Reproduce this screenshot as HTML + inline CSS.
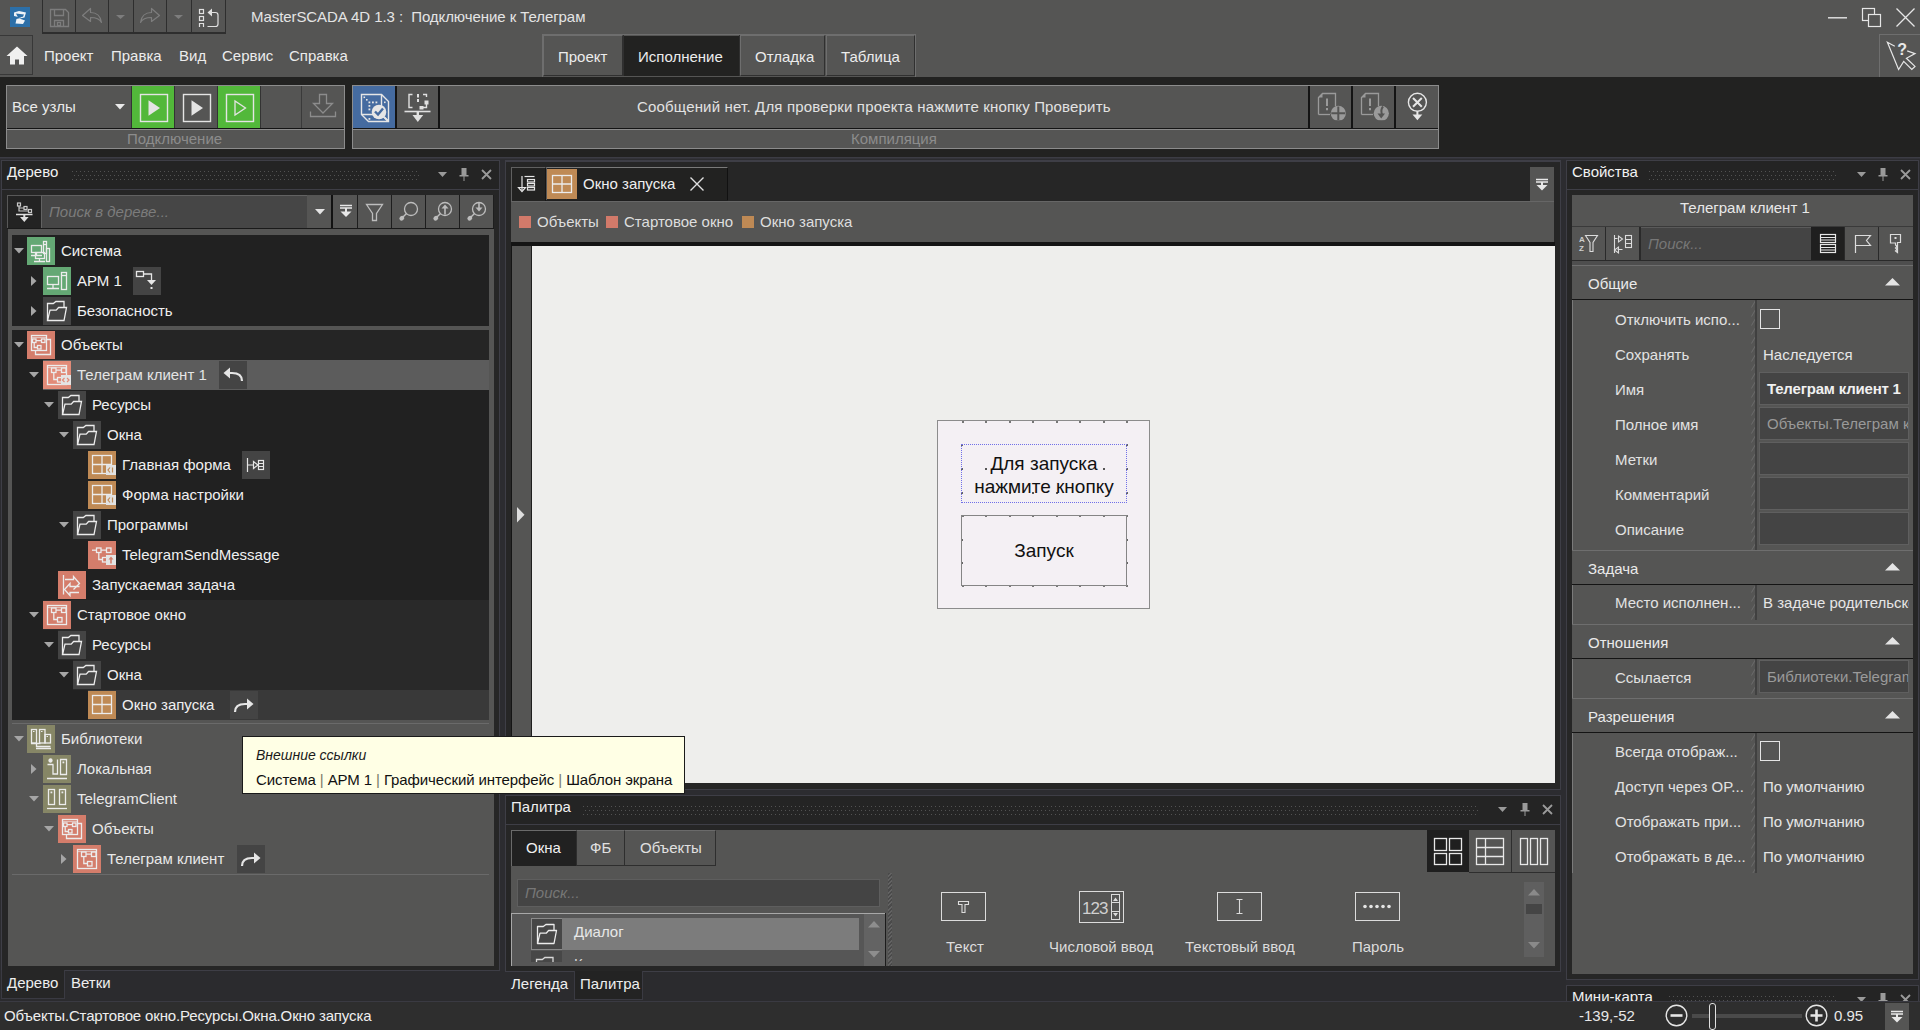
<!DOCTYPE html>
<html><head><meta charset="utf-8"><title>MasterSCADA 4D</title>
<style>*{box-sizing:border-box;margin:0;padding:0}
html,body{width:1920px;height:1030px;overflow:hidden;background:#222221;font-family:"Liberation Sans",sans-serif;font-size:15px;color:#e6e6e6}
.a{position:absolute}
.t{position:absolute;white-space:nowrap;line-height:18px}
svg{position:absolute;overflow:visible}
</style></head><body>
<div class="a" style="left:0px;top:0px;width:1920px;height:77px;background:#555554"></div><div class="a" style="left:10px;top:7px;width:20px;height:20px;background:#2c6fa8"></div><svg style="left:10px;top:7px" width="20" height="20" viewBox="0 0 20 20" ><path d="M4 5.5L9 4l7 1.5-1.5 5-5 1 5.5 2-2 3.5-7.5-.5 1-4.5 5-1.2L4 9z" fill="#eef3f8"/><path d="M6 6.5l8 1-1 2.2-5 .8z" fill="#2c6fa8"/></svg><div class="a" style="left:42px;top:-1px;width:34px;height:35px;border:1px solid #2e2e2e;border-bottom-width:2px"></div><div class="a" style="left:75px;top:-1px;width:34px;height:35px;border:1px solid #2e2e2e;border-bottom-width:2px"></div><div class="a" style="left:108px;top:-1px;width:26px;height:35px;border:1px solid #2e2e2e;border-bottom-width:2px"></div><div class="a" style="left:133px;top:-1px;width:34px;height:35px;border:1px solid #2e2e2e;border-bottom-width:2px"></div><div class="a" style="left:166px;top:-1px;width:26px;height:35px;border:1px solid #2e2e2e;border-bottom-width:2px"></div><div class="a" style="left:191px;top:-1px;width:35px;height:35px;border:1px solid #2e2e2e;border-bottom-width:2px"></div><svg style="left:42px;top:0px" width="34" height="33" viewBox="0 0 34 33" ><g fill="none" stroke="#7d7d7d" stroke-width="1.3"><path d="M8.5 9.5h15l3 3v14h-18z"/><path d="M12.5 9.5v6h9v-6M12.5 26.5v-6h9v6"/><rect x="15.5" y="22.5" width="3" height="3"/></g></svg><svg style="left:75px;top:0px" width="34" height="33" viewBox="0 0 34 33" ><path d="M7.5 15.5l8-7v4c6 0 10 3 11 10-2-4-6-5-11-5v4z" fill="none" stroke="#7d7d7d" stroke-width="1.2" stroke-linejoin="round"/></svg><svg style="left:108px;top:0px" width="26" height="33" viewBox="0 0 26 33" ><path d="M8 15h9l-4.5 4z" fill="#7d7d7d"/></svg><svg style="left:133px;top:0px" width="34" height="33" viewBox="0 0 34 33" ><path d="M26.5 15.5l-8-7v4c-6 0-10 3-11 10 2-4 6-5 11-5v4z" fill="none" stroke="#7d7d7d" stroke-width="1.2" stroke-linejoin="round"/></svg><svg style="left:166px;top:0px" width="26" height="33" viewBox="0 0 26 33" ><path d="M8 15h9l-4.5 4z" fill="#7d7d7d"/></svg><svg style="left:191px;top:0px" width="35" height="33" viewBox="0 0 35 33" ><g fill="none" stroke="#e0e0e0" stroke-width="1.2"><rect x="8.5" y="9.5" width="4" height="4"/><rect x="8.5" y="16.5" width="4" height="4"/><path d="M8.5 27v-3.5h4V27"/><path d="M20 12.5h4.5q2.5 0 2.5 2.5v9q0 2.5-2.5 2.5H16.5"/></g><path d="M21 8.5v8l-4.5-4z" fill="#e0e0e0"/></svg><div class="t" style="left:251px;top:8px;color:#e4e4e4;letter-spacing:-0.07px">MasterSCADA 4D 1.3 :&nbsp; Подключение к Телеграм</div><svg style="left:1828px;top:16px" width="20" height="4" viewBox="0 0 20 4" ><path d="M0 1.8h19" stroke="#e6e6e6" stroke-width="1.4"/></svg><svg style="left:1862px;top:8px" width="20" height="20" viewBox="0 0 20 20" ><g fill="none" stroke="#e6e6e6" stroke-width="1.2"><rect x="0.5" y="0.5" width="12" height="12"/><rect x="6.5" y="6.5" width="12" height="12" fill="#555554"/></g></svg><svg style="left:1896px;top:8px" width="20" height="20" viewBox="0 0 20 20" ><path d="M0.5 0.5l18 18M18.5 0.5l-18 18" stroke="#e6e6e6" stroke-width="1.3"/></svg><div class="a" style="left:-1px;top:35px;width:34px;height:40px;border:1px solid #383838;background:#555554"></div><svg style="left:0px;top:36px" width="32" height="39" viewBox="0 0 32 39" ><path d="M17 10.5L6.5 20H10v8.5h5v-5h4v5h5V20h3.5z" fill="#f0f0f0"/></svg><div class="t" style="left:44px;top:47px;color:#ececec">Проект</div><div class="t" style="left:111px;top:47px;color:#ececec">Правка</div><div class="t" style="left:179px;top:47px;color:#ececec">Вид</div><div class="t" style="left:222px;top:47px;color:#ececec">Сервис</div><div class="t" style="left:289px;top:47px;color:#ececec">Справка</div><div class="a" style="left:542px;top:34px;width:374px;height:43px;border:1px solid #6e6e6e;border-bottom:none"></div><div class="a" style="left:543px;top:35px;width:80px;height:41px;border:1px solid #6e6e6e;border-right-color:#303030;border-bottom-color:#303030"></div><div class="a" style="left:740px;top:35px;width:85px;height:41px;border:1px solid #6e6e6e;border-right-color:#303030;border-bottom-color:#303030"></div><div class="a" style="left:826px;top:35px;width:89px;height:41px;border:1px solid #6e6e6e;border-right-color:#303030;border-bottom-color:#303030"></div><div class="a" style="left:624px;top:36px;width:115px;height:40px;background:#222221"></div><div class="a" style="left:623px;top:35px;width:1px;height:41px;background:#303030"></div><div class="a" style="left:739px;top:35px;width:1px;height:41px;background:#303030"></div><div class="t" style="left:558px;top:48px;color:#ececec">Проект</div><div class="t" style="left:638px;top:48px;color:#ececec">Исполнение</div><div class="t" style="left:755px;top:48px;color:#ececec">Отладка</div><div class="t" style="left:841px;top:48px;color:#ececec">Таблица</div><div class="a" style="left:1879px;top:34px;width:42px;height:43px;border:1px solid #6e6e6e;border-bottom:none;border-right:none"></div><svg style="left:1879px;top:34px" width="41" height="42" viewBox="0 0 41 42" ><path d="M15.8 12.2L8.4 8.3L19.6 35.5L24.7 27.4L32.8 35.5L36 32.4L27.4 24.3L36 19.6L28.2 16.9" fill="none" stroke="#e8e8e8" stroke-width="1.2" stroke-linejoin="miter"/><text x="18.3" y="21" font-family="Liberation Sans" font-weight="bold" font-size="16" fill="#e8e8e8">?</text></svg><div class="a" style="left:6px;top:85px;width:339px;height:64px;background:#555554;border:1px solid #8c8c8c"></div><div class="a" style="left:7px;top:128px;width:337px;height:1px;background:#141414"></div><div class="a" style="left:7px;top:129px;width:337px;height:1px;background:#8c8c8c"></div><div class="t" style="left:127px;top:130px;color:#8c8c8c">Подключение</div><div class="t" style="left:12px;top:98px;color:#eaeaea">Все узлы</div><svg style="left:115px;top:104px" width="10" height="6"><path d="M0 0h10L5 5.5z" fill="#eaeaea"/></svg><div class="a" style="left:131px;top:86px;width:1px;height:42px;background:#333333"></div><div class="a" style="left:132px;top:86px;width:42px;height:42px;background:#52b83a"></div><div class="a" style="left:174px;top:86px;width:1px;height:42px;background:#333"></div><div class="a" style="left:217px;top:86px;width:1px;height:42px;background:#333"></div><div class="a" style="left:218px;top:86px;width:42px;height:42px;background:#52b83a"></div><div class="a" style="left:260px;top:86px;width:1px;height:42px;background:#333"></div><svg style="left:132px;top:86px" width="42" height="42" viewBox="0 0 42 42" ><rect x="8.5" y="8.5" width="27" height="27" fill="none" stroke="#e4e4e4" stroke-width="1.4"/><path d="M16.5 14.2v15.5l11.5-7.75z" fill="#e4e4e4"/></svg><svg style="left:175px;top:86px" width="42" height="42" viewBox="0 0 42 42" ><rect x="8.5" y="8.5" width="27" height="27" fill="none" stroke="#e4e4e4" stroke-width="1.4"/><path d="M16.5 14.2v15.5l11.5-7.75z" fill="#e4e4e4"/></svg><svg style="left:218px;top:86px" width="42" height="42" viewBox="0 0 42 42" ><rect x="8.5" y="8.5" width="27" height="27" fill="none" stroke="#e4e4e4" stroke-width="1.4"/><path d="M17 15v14l10.5-7z" fill="none" stroke="#e4e4e4" stroke-width="1.3"/></svg><div class="a" style="left:301px;top:86px;width:1px;height:42px;background:#3a3a3a"></div><svg style="left:302px;top:86px" width="42" height="42" viewBox="0 0 42 42" ><g fill="none" stroke="#8c8c8c" stroke-width="1.3"><path d="M17.5 8.5h7v9h6l-9.5 9.5-9.5-9.5h6z"/><path d="M8.5 25.5v5h25v-5"/></g></svg><div class="a" style="left:352px;top:85px;width:1087px;height:64px;background:#555554;border:1px solid #8c8c8c"></div><div class="a" style="left:353px;top:128px;width:1085px;height:1px;background:#141414"></div><div class="a" style="left:353px;top:129px;width:1085px;height:1px;background:#8c8c8c"></div><div class="t" style="left:851px;top:130px;color:#8c8c8c">Компиляция</div><div class="t" style="left:637px;top:98px;color:#e2e2e2;letter-spacing:0.17px">Сообщений нет. Для проверки проекта нажмите кнопку Проверить</div><div class="a" style="left:353px;top:86px;width:42px;height:42px;background:#456ba0"></div><div class="a" style="left:395px;top:86px;width:2px;height:42px;background:#141414"></div><div class="a" style="left:438px;top:86px;width:2px;height:42px;background:#141414"></div><div class="a" style="left:1308px;top:86px;width:2px;height:42px;background:#141414"></div><div class="a" style="left:1351px;top:86px;width:2px;height:42px;background:#141414"></div><div class="a" style="left:1394px;top:86px;width:2px;height:42px;background:#141414"></div><svg style="left:353px;top:86px" width="42" height="42" viewBox="0 0 42 42" ><g fill="none" stroke="#e6e6e6" stroke-width="1.4" stroke-linejoin="miter"><path d="M8.5 8.5H28.5L35.5 15.5V35.5H15.5L8.5 28.5Z"/><path d="M28.5 8.5V22M8.5 28.5H20M28.5 28.5L35.5 35.5"/></g><g fill="#e6e6e6"><rect x="10.5" y="10.5" width="1.6" height="1.6"/><rect x="13" y="13" width="1.6" height="1.6"/><rect x="15.5" y="15.5" width="1.8" height="1.8"/><rect x="19" y="15.5" width="1.8" height="1.8"/><rect x="22.5" y="15.5" width="1.8" height="1.8"/><rect x="15.5" y="19" width="1.8" height="1.8"/><rect x="15.5" y="22.5" width="1.8" height="1.8"/><rect x="15.5" y="32" width="1.8" height="1.8"/><rect x="31" y="15.5" width="1.6" height="1.6"/></g><circle cx="26" cy="26" r="7.3" fill="#e6e6e6"/><path d="M22 25.5L25 28.5L30 22.5" fill="none" stroke="#456ba0" stroke-width="2.4"/><path d="M31 31L35 35" stroke="#e6e6e6" stroke-width="2"/></svg><svg style="left:396px;top:86px" width="42" height="42" viewBox="0 0 42 42" ><g fill="none" stroke="#e0e0e0" stroke-width="1.4"><path d="M16.5 8.5H13V21.5H16.5M27 8.5H30.5V11M30.5 18V21.5H27"/></g><g fill="#e0e0e0"><rect x="21" y="8" width="2" height="3.5"/><rect x="21" y="13" width="2" height="3"/><rect x="28.5" y="14.5" width="4" height="4"/><rect x="23.5" y="20" width="4" height="3.5"/></g><path d="M8.5 25.5H34.5" stroke="#e0e0e0" stroke-width="1.6"/><path d="M21.8 25.5V30" stroke="#e0e0e0" stroke-width="2.4"/><path d="M16.5 29H27.2L21.8 36Z" fill="#e0e0e0"/></svg><svg style="left:1309px;top:86px" width="43" height="42" viewBox="0 0 43 42" ><path d="M9.5 28.5V11.5L13.5 7.5H26.5V20" fill="none" stroke="#9a9a9a" stroke-width="1.3"/><path d="M9.5 28.5H21" stroke="#9a9a9a" stroke-width="1.3"/><path d="M9.5 11.5L13.5 7.5V11.5z" fill="#9a9a9a"/><path d="M17 12.5h2v7.5h-2zM17 22h2v2.2h-2z" fill="#9a9a9a"/><clipPath id="cp1"><rect x="0" y="0" width="43" height="34.2"/></clipPath><g clip-path="url(#cp1)"><circle cx="29.3" cy="27.3" r="7.6" fill="#9a9a9a"/><path d="M22.3 27.3h14M29.3 20.5v13.5" stroke="#555554" stroke-width="2"/></g></svg><svg style="left:1352px;top:86px" width="43" height="42" viewBox="0 0 43 42" ><path d="M9.5 28.5V11.5L13.5 7.5H26.5V20" fill="none" stroke="#9a9a9a" stroke-width="1.3"/><path d="M9.5 28.5H21" stroke="#9a9a9a" stroke-width="1.3"/><path d="M9.5 11.5L13.5 7.5V11.5z" fill="#9a9a9a"/><path d="M17 12.5h2v7.5h-2zM17 22h2v2.2h-2z" fill="#9a9a9a"/><clipPath id="cp2"><rect x="0" y="0" width="43" height="34.2"/></clipPath><g clip-path="url(#cp2)"><circle cx="29.3" cy="27.3" r="7.6" fill="#9a9a9a"/><path d="M31 20.5c-2.5 3-2 5-1 8" fill="none" stroke="#555554" stroke-width="2"/><path d="M25.5 27.5h7.5l-3.8 5z" fill="#555554"/></g></svg><svg style="left:1396px;top:86px" width="43" height="42" viewBox="0 0 43 42" ><circle cx="21.4" cy="16.3" r="9" fill="none" stroke="#e6e6e6" stroke-width="1.4"/><path d="M17 12l8.8 8.8M25.8 12l-8.8 8.8" stroke="#e6e6e6" stroke-width="2"/><path d="M21.4 25.3v4.2" stroke="#e6e6e6" stroke-width="2"/><path d="M16.5 28.5h9.8l-4.9 5.8z" fill="#e6e6e6"/></svg>
<div class="a" style="left:0px;top:158px;width:1920px;height:843px;background:#2c2c30"></div>
<div class="a" style="left:0px;top:157px;width:1920px;height:1px;background:#3c3c44"></div>
<div class="a" style="left:0px;top:158px;width:1920px;height:1px;background:#333339"></div>
<div class="a" style="left:1px;top:160px;width:499px;height:811px;border:1px solid #3e3e46;background:#262626"></div><div class="a" style="left:2px;top:161px;width:497px;height:28px;background:#242424"></div><div class="a" style="left:2px;top:189px;width:497px;height:1px;background:#3e3e46"></div><div class="t" style="left:7px;top:163px;color:#f2f2f2;">Дерево</div><div class="a" style="left:72px;top:171px;width:346px;height:1px;background-image:linear-gradient(90deg,#525252 1px,transparent 1px);background-size:4px 1px"></div><div class="a" style="left:74px;top:175px;width:346px;height:1px;background-image:linear-gradient(90deg,#525252 1px,transparent 1px);background-size:4px 1px"></div><div class="a" style="left:72px;top:179px;width:346px;height:1px;background-image:linear-gradient(90deg,#525252 1px,transparent 1px);background-size:4px 1px"></div><svg style="left:438px;top:172px" width="9" height="5"><path d="M0 0h9L4.5 5z" fill="#9a9a9a"/></svg><svg style="left:459px;top:168px" width="10" height="13"><path d="M2.5 0h5v7h2v1.5h-9V7h2z" fill="#9a9a9a"/><path d="M5 8v5" stroke="#9a9a9a" stroke-width="1"/></svg><svg style="left:481px;top:169px" width="11" height="11"><path d="M1 1l9 9M10 1l-9 9" stroke="#9a9a9a" stroke-width="1.8"/></svg><div class="a" style="left:7px;top:195px;width:34px;height:34px;border:1px solid #585858;border-right:none;border-bottom:none;background:#232323"></div><svg style="left:7px;top:195px" width="34" height="34" viewBox="0 0 34 34" ><g fill="none" stroke="#c8c8c8" stroke-width="1.2"><rect x="10.5" y="8" width="3" height="3"/><rect x="17" y="11.5" width="3" height="3"/><rect x="21.5" y="14.5" width="3" height="3"/><path d="M12 11v5h9.5M12 13h5"/></g><path d="M9 19.5h16.5" stroke="#e0e0e0" stroke-width="1.5"/><path d="M17.3 20v3" stroke="#e0e0e0" stroke-width="2"/><path d="M13 22h8.6l-4.3 5z" fill="#e0e0e0"/></svg><div class="a" style="left:41px;top:195px;width:267px;height:34px;background:#464646;border:1px solid #626262;border-right:none"></div><div class="t" style="left:49px;top:203px;color:#7c7c7c;font-style:italic">Поиск в дереве...</div><div class="a" style="left:307px;top:195px;width:25px;height:33px;background:#555554"></div><svg style="left:315px;top:209px" width="10" height="6"><path d="M0 0h10L5 5.5z" fill="#e4e4e4"/></svg><div class="a" style="left:331px;top:195px;width:2px;height:34px;background:#121212"></div><div class="a" style="left:333px;top:195px;width:24px;height:33px;background:#555554"></div><div class="a" style="left:357px;top:195px;width:1px;height:33px;background:#1e1e1e"></div><div class="a" style="left:358px;top:195px;width:33px;height:33px;background:#555554"></div><div class="a" style="left:391px;top:195px;width:1px;height:33px;background:#1e1e1e"></div><div class="a" style="left:392px;top:195px;width:33px;height:33px;background:#555554"></div><div class="a" style="left:425px;top:195px;width:1px;height:33px;background:#1e1e1e"></div><div class="a" style="left:426px;top:195px;width:33px;height:33px;background:#555554"></div><div class="a" style="left:459px;top:195px;width:1px;height:33px;background:#1e1e1e"></div><div class="a" style="left:460px;top:195px;width:33px;height:33px;background:#555554"></div><div class="a" style="left:493px;top:195px;width:1px;height:33px;background:#1e1e1e"></div><div class="a" style="left:7px;top:228px;width:487px;height:1px;background:#1a1a1a"></div><svg style="left:333px;top:195px" width="24" height="33" viewBox="0 0 24 33" ><path d="M7 10.5h12M7 13h12" stroke="#e8e8e8" stroke-width="1.4"/><path d="M13 13v4" stroke="#e8e8e8" stroke-width="2"/><path d="M7.5 16.5h11L13 22z" fill="#e8e8e8"/></svg><svg style="left:358px;top:195px" width="33" height="33" viewBox="0 0 33 33" ><path d="M8.5 9.5h16l-6 9v7h-4v-7z" fill="none" stroke="#bdbdbd" stroke-width="1.3"/></svg><svg style="left:392px;top:195px" width="33" height="33" viewBox="0 0 33 33" ><circle cx="19" cy="14" r="6.5" fill="none" stroke="#bdbdbd" stroke-width="1.3"/><path d="M14.5 18.5l-4 4" stroke="#bdbdbd" stroke-width="1.5"/><ellipse cx="9.8" cy="23.2" rx="2.6" ry="2.2" fill="#bdbdbd" transform="rotate(-40 9.8 23.2)"/></svg><svg style="left:426px;top:195px" width="33" height="33" viewBox="0 0 33 33" ><circle cx="19" cy="14" r="6.5" fill="none" stroke="#bdbdbd" stroke-width="1.3"/><path d="M14.5 18.5l-4 4" stroke="#bdbdbd" stroke-width="1.5"/><ellipse cx="9.8" cy="23.2" rx="2.6" ry="2.2" fill="#bdbdbd" transform="rotate(-40 9.8 23.2)"/><path d="M19 19.5v-8" stroke="#bdbdbd" stroke-width="1.6"/><path d="M15.5 13.5L19 9.5l3.5 4z" fill="#bdbdbd"/></svg><svg style="left:460px;top:195px" width="33" height="33" viewBox="0 0 33 33" ><circle cx="19" cy="14" r="6.5" fill="none" stroke="#bdbdbd" stroke-width="1.3"/><path d="M14.5 18.5l-4 4" stroke="#bdbdbd" stroke-width="1.5"/><ellipse cx="9.8" cy="23.2" rx="2.6" ry="2.2" fill="#bdbdbd" transform="rotate(-40 9.8 23.2)"/><path d="M19 7.5v6" stroke="#bdbdbd" stroke-width="1.6"/><path d="M15.5 12.5L19 16.5l3.5-4z" fill="#bdbdbd"/></svg><div class="a" style="left:8px;top:229px;width:486px;height:737px;background:#555554"></div><div class="a" style="left:12px;top:235px;width:477px;height:91px;background:#212121"></div><div class="a" style="left:12px;top:330px;width:477px;height:390px;background:#212121"></div><div class="a" style="left:12px;top:723px;width:477px;height:1px;background:#6a6a6a"></div><div class="a" style="left:12px;top:874px;width:477px;height:1px;background:#6a6a6a"></div><svg style="left:14px;top:248px" width="10" height="6"><path d="M0 0h10L5 5.5z" fill="#a6a6a6"/></svg><div class="a" style="left:27px;top:237px;width:28px;height:28px;background:#64a874"></div><svg style="left:27px;top:237px" width="28" height="28" viewBox="0 0 28 28" ><g fill="none" stroke="#ececec" stroke-width="1.3"><rect x="4.5" y="8.5" width="10" height="7"/><path d="M4 18.5h11M9.5 15.5v3"/><rect x="16.5" y="4.5" width="3" height="12"/><path d="M16.5 7.5h3"/><rect x="8.5" y="15.5" width="9" height="6"/><path d="M7 24.5h11M12.5 21.5v3"/><rect x="19.5" y="11.5" width="3" height="13"/></g></svg><div class="t" style="left:61px;top:242px;color:#f0f0f0;">Система</div><svg style="left:31px;top:276px" width="6" height="10"><path d="M0 0v10L5.5 5z" fill="#a6a6a6"/></svg><div class="a" style="left:43px;top:267px;width:28px;height:28px;background:#64a874"></div><svg style="left:43px;top:267px" width="28" height="28" viewBox="0 0 28 28" ><g fill="none" stroke="#ececec" stroke-width="1.3"><rect x="4.5" y="9.5" width="11" height="8"/><path d="M4 21.5h12M10 17.5v4"/><rect x="18.5" y="5.5" width="5" height="17"/><path d="M18.5 8.5h5"/></g></svg><div class="t" style="left:77px;top:272px;color:#f0f0f0;">АРМ 1</div><div class="a" style="left:133px;top:267px;width:28px;height:28px;background:#444444"></div><svg style="left:133px;top:267px" width="28" height="28" viewBox="0 0 28 28" ><g fill="none" stroke="#e6e6e6" stroke-width="1.3"><rect x="3.5" y="4.5" width="7" height="5"/><path d="M10.5 7h8v6"/></g><path d="M14 13h9l-4.5 5z" fill="#e6e6e6"/><rect x="17.5" y="20" width="2" height="2" fill="#e6e6e6"/></svg><svg style="left:31px;top:306px" width="6" height="10"><path d="M0 0v10L5.5 5z" fill="#a6a6a6"/></svg><div class="a" style="left:43px;top:297px;width:28px;height:28px;background:#444444"></div><svg style="left:43px;top:297px" width="28" height="28" viewBox="0 0 28 28" ><g fill="none" stroke="#ececec" stroke-width="1.3" stroke-linejoin="miter"><path d="M4.5 23.5V6.5h5.8l2.6-2h8.1v6"/><path d="M4.5 23.5H21L23.5 10.5h-7.9l-2.4 2.7H7z"/></g></svg><div class="t" style="left:77px;top:302px;color:#f0f0f0;">Безопасность</div><div class="a" style="left:27px;top:330px;width:462px;height:30px;background:#252525"></div><svg style="left:14px;top:342px" width="10" height="6"><path d="M0 0h10L5 5.5z" fill="#a6a6a6"/></svg><div class="a" style="left:27px;top:331px;width:28px;height:28px;background:#d47d6b"></div><svg style="left:27px;top:331px" width="28" height="28" viewBox="0 0 28 28" ><g fill="none" stroke="#ececec" stroke-width="1.3"><path d="M8.5 20v3.5h15v-15H20"/><rect x="4.5" y="4.5" width="15" height="15"/><path d="M5 6.5h14" opacity=".6"/><rect x="5.5" y="8" width="3.5" height="3.5"/><rect x="14.5" y="8" width="3.5" height="3.5"/><rect x="10.5" y="14.5" width="3.5" height="3.5"/><path d="M9 9.7h5.5M7.2 11.5v5h3.3"/></g></svg><div class="t" style="left:61px;top:336px;color:#f0f0f0;">Объекты</div><div class="a" style="left:43px;top:360px;width:446px;height:30px;background:#5c5c5c"></div><svg style="left:29px;top:372px" width="10" height="6"><path d="M0 0h10L5 5.5z" fill="#a6a6a6"/></svg><div class="a" style="left:43px;top:361px;width:28px;height:28px;background:#e28b78"></div><svg style="left:43px;top:361px" width="28" height="28" viewBox="0 0 28 28" ><g fill="none" stroke="#ececec" stroke-width="1.3"><rect x="4.5" y="4.5" width="19" height="19"/><path d="M5 6.5h18" opacity=".6"/><rect x="8.5" y="7" width="4.5" height="4.5"/><rect x="18.5" y="7" width="4.5" height="4.5"/><rect x="14.5" y="16.5" width="4.5" height="4.5"/><path d="M13 9.2h5.5M10.8 11.5v7h3.7"/></g><rect x="18" y="14" width="10" height="10" fill="#e4e4e4"/><path d="M21.5 17l-2 2 2 2M24 17l2 2-2 2" fill="none" stroke="#e28b78" stroke-width="1.2"/></svg><div class="t" style="left:77px;top:366px;color:#e4e4e4;">Телеграм клиент 1</div><div class="a" style="left:219px;top:361px;width:28px;height:28px;background:#444444"></div><svg style="left:219px;top:361px" width="28" height="28" viewBox="0 0 28 28" ><path d="M23 20c0-6-4-8-10-8H9" fill="none" stroke="#e6e6e6" stroke-width="2.2"/><path d="M11 6.5L4.5 12 11 17.5z" fill="#e6e6e6"/></svg><svg style="left:44px;top:402px" width="10" height="6"><path d="M0 0h10L5 5.5z" fill="#a6a6a6"/></svg><div class="a" style="left:58px;top:391px;width:28px;height:28px;background:#444444"></div><svg style="left:58px;top:391px" width="28" height="28" viewBox="0 0 28 28" ><g fill="none" stroke="#ececec" stroke-width="1.3" stroke-linejoin="miter"><path d="M4.5 23.5V6.5h5.8l2.6-2h8.1v6"/><path d="M4.5 23.5H21L23.5 10.5h-7.9l-2.4 2.7H7z"/></g></svg><div class="t" style="left:92px;top:396px;color:#f0f0f0;">Ресурсы</div><svg style="left:59px;top:432px" width="10" height="6"><path d="M0 0h10L5 5.5z" fill="#a6a6a6"/></svg><div class="a" style="left:73px;top:421px;width:28px;height:28px;background:#444444"></div><svg style="left:73px;top:421px" width="28" height="28" viewBox="0 0 28 28" ><g fill="none" stroke="#ececec" stroke-width="1.3" stroke-linejoin="miter"><path d="M4.5 23.5V6.5h5.8l2.6-2h8.1v6"/><path d="M4.5 23.5H21L23.5 10.5h-7.9l-2.4 2.7H7z"/></g></svg><div class="t" style="left:107px;top:426px;color:#f0f0f0;">Окна</div><div class="a" style="left:88px;top:451px;width:28px;height:28px;background:#bf8a55"></div><svg style="left:88px;top:451px" width="28" height="28" viewBox="0 0 28 28" ><g fill="none" stroke="#ececec" stroke-width="1.3"><rect x="4.5" y="4.5" width="19" height="18"/><path d="M14 4.5v18M4.5 13.5h19"/></g><rect x="18" y="14" width="10" height="10" fill="#e2e2e2"/><path d="M22 16.5l-2 2.5 2 2.5M24.5 16.5v5" fill="none" stroke="#bf8a55" stroke-width="1.2"/></svg><div class="t" style="left:122px;top:456px;color:#f0f0f0;">Главная форма</div><div class="a" style="left:242px;top:451px;width:28px;height:28px;background:#444444"></div><svg style="left:242px;top:451px" width="28" height="28" viewBox="0 0 28 28" ><g fill="none" stroke="#e6e6e6" stroke-width="1.2"><path d="M5.5 7v14M5.5 14h6"/><path d="M11.5 10.5v7l4.5-3.5z"/><rect x="16.5" y="9.5" width="5" height="9"/><path d="M16.5 12.5h5M16.5 15.5h5"/></g></svg><div class="a" style="left:88px;top:481px;width:28px;height:28px;background:#bf8a55"></div><svg style="left:88px;top:481px" width="28" height="28" viewBox="0 0 28 28" ><g fill="none" stroke="#ececec" stroke-width="1.3"><rect x="4.5" y="4.5" width="19" height="18"/><path d="M14 4.5v18M4.5 13.5h19"/></g><rect x="18" y="14" width="10" height="10" fill="#e2e2e2"/><path d="M22 16.5l-2 2.5 2 2.5M24.5 16.5v5" fill="none" stroke="#bf8a55" stroke-width="1.2"/></svg><div class="t" style="left:122px;top:486px;color:#f0f0f0;">Форма настройки</div><svg style="left:59px;top:522px" width="10" height="6"><path d="M0 0h10L5 5.5z" fill="#a6a6a6"/></svg><div class="a" style="left:73px;top:511px;width:28px;height:28px;background:#444444"></div><svg style="left:73px;top:511px" width="28" height="28" viewBox="0 0 28 28" ><g fill="none" stroke="#ececec" stroke-width="1.3" stroke-linejoin="miter"><path d="M4.5 23.5V6.5h5.8l2.6-2h8.1v6"/><path d="M4.5 23.5H21L23.5 10.5h-7.9l-2.4 2.7H7z"/></g></svg><div class="t" style="left:107px;top:516px;color:#f0f0f0;">Программы</div><div class="a" style="left:88px;top:541px;width:28px;height:28px;background:#d47d6b"></div><svg style="left:88px;top:541px" width="28" height="28" viewBox="0 0 28 28" ><g fill="none" stroke="#ececec" stroke-width="1.3"><path d="M4 9.2h5"/><rect x="8.5" y="7" width="4.5" height="4.5"/><rect x="18.5" y="7" width="4.5" height="4.5"/><rect x="14.5" y="16.5" width="4.5" height="4.5"/><path d="M13 9.2h5.5M10.8 11.5v7h3.7"/></g><rect x="18" y="14" width="10" height="10" fill="#e4e4e4"/><path d="M23 22.5v-5" stroke="#d47d6b" stroke-width="1.6"/><path d="M20.5 18.5l2.5-3 2.5 3z" fill="#d47d6b"/></svg><div class="t" style="left:122px;top:546px;color:#f0f0f0;">TelegramSendMessage</div><div class="a" style="left:58px;top:571px;width:28px;height:28px;background:#d47d6b"></div><svg style="left:58px;top:571px" width="28" height="28" viewBox="0 0 28 28" ><g fill="none" stroke="#ececec" stroke-width="1.3" stroke-linejoin="miter"><path d="M5.5 4v19.5"/><path d="M7 8.5h8.5V5.5l6 7-6 6"/><path d="M21.5 15.5h-9.5v-3l-5.5 6 5.5 6v-3h9"/></g></svg><div class="t" style="left:92px;top:576px;color:#f0f0f0;">Запускаемая задача</div><div class="a" style="left:43px;top:600px;width:446px;height:30px;background:#292929"></div><svg style="left:29px;top:612px" width="10" height="6"><path d="M0 0h10L5 5.5z" fill="#a6a6a6"/></svg><div class="a" style="left:43px;top:601px;width:28px;height:28px;background:#d47d6b"></div><svg style="left:43px;top:601px" width="28" height="28" viewBox="0 0 28 28" ><g fill="none" stroke="#ececec" stroke-width="1.3"><rect x="4.5" y="4.5" width="19" height="19"/><path d="M5 6.5h18" opacity=".6"/><rect x="8.5" y="7" width="4.5" height="4.5"/><rect x="18.5" y="7" width="4.5" height="4.5"/><rect x="14.5" y="16.5" width="4.5" height="4.5"/><path d="M13 9.2h5.5M10.8 11.5v7h3.7"/></g></svg><div class="t" style="left:77px;top:606px;color:#f0f0f0;">Стартовое окно</div><div class="a" style="left:58px;top:630px;width:431px;height:30px;background:#292929"></div><svg style="left:44px;top:642px" width="10" height="6"><path d="M0 0h10L5 5.5z" fill="#a6a6a6"/></svg><div class="a" style="left:58px;top:631px;width:28px;height:28px;background:#444444"></div><svg style="left:58px;top:631px" width="28" height="28" viewBox="0 0 28 28" ><g fill="none" stroke="#ececec" stroke-width="1.3" stroke-linejoin="miter"><path d="M4.5 23.5V6.5h5.8l2.6-2h8.1v6"/><path d="M4.5 23.5H21L23.5 10.5h-7.9l-2.4 2.7H7z"/></g></svg><div class="t" style="left:92px;top:636px;color:#f0f0f0;">Ресурсы</div><div class="a" style="left:73px;top:660px;width:416px;height:30px;background:#292929"></div><svg style="left:59px;top:672px" width="10" height="6"><path d="M0 0h10L5 5.5z" fill="#a6a6a6"/></svg><div class="a" style="left:73px;top:661px;width:28px;height:28px;background:#444444"></div><svg style="left:73px;top:661px" width="28" height="28" viewBox="0 0 28 28" ><g fill="none" stroke="#ececec" stroke-width="1.3" stroke-linejoin="miter"><path d="M4.5 23.5V6.5h5.8l2.6-2h8.1v6"/><path d="M4.5 23.5H21L23.5 10.5h-7.9l-2.4 2.7H7z"/></g></svg><div class="t" style="left:107px;top:666px;color:#f0f0f0;">Окна</div><div class="a" style="left:88px;top:690px;width:401px;height:30px;background:#393939"></div><div class="a" style="left:88px;top:691px;width:28px;height:28px;background:#bf8a55"></div><svg style="left:88px;top:691px" width="28" height="28" viewBox="0 0 28 28" ><g fill="none" stroke="#ececec" stroke-width="1.3"><rect x="4.5" y="4.5" width="19" height="18"/><path d="M14 4.5v18M4.5 13.5h19"/></g></svg><div class="t" style="left:122px;top:696px;color:#f0f0f0;">Окно запуска</div><div class="a" style="left:230px;top:691px;width:28px;height:28px;background:#444444"></div><svg style="left:230px;top:691px" width="28" height="28" viewBox="0 0 28 28" ><path d="M5 21c0-6 4-8 10-8h4" fill="none" stroke="#e6e6e6" stroke-width="2.2"/><path d="M17 7.5L23.5 13 17 18.5z" fill="#e6e6e6"/></svg><svg style="left:14px;top:736px" width="10" height="6"><path d="M0 0h10L5 5.5z" fill="#a6a6a6"/></svg><div class="a" style="left:27px;top:725px;width:28px;height:28px;background:#868666"></div><svg style="left:27px;top:725px" width="28" height="28" viewBox="0 0 28 28" ><g fill="none" stroke="#ececec" stroke-width="1.3"><rect x="4.5" y="4.5" width="5" height="13.5"/><rect x="12.5" y="4.5" width="5.5" height="13.5"/><rect x="18" y="9.5" width="5.5" height="8.5"/><path d="M4 18.5h9.5M9.5 18.5v3h14M9 23.5h15"/></g><path d="M6 6.5h1.5M14 6.5h1.5M19.5 11.5h1.5" stroke="#ececec" stroke-width="1"/></svg><div class="t" style="left:61px;top:730px;color:#e8e8e8;">Библиотеки</div><svg style="left:31px;top:764px" width="6" height="10"><path d="M0 0v10L5.5 5z" fill="#a6a6a6"/></svg><div class="a" style="left:43px;top:755px;width:28px;height:28px;background:#868666"></div><svg style="left:43px;top:755px" width="28" height="28" viewBox="0 0 28 28" ><g fill="none" stroke="#ececec" stroke-width="1.3"><circle cx="7.5" cy="5.5" r="1.5" fill="#ececec"/><path d="M4.5 9.5h6M10 9.5v9.5h4.5V4.5M17.5 4.5h6v15h-6z M4 23.5h20"/></g><rect x="19.5" y="6.5" width="1.8" height="1.8" fill="#ececec"/></svg><div class="t" style="left:77px;top:760px;color:#e8e8e8;">Локальная</div><svg style="left:29px;top:796px" width="10" height="6"><path d="M0 0h10L5 5.5z" fill="#a6a6a6"/></svg><div class="a" style="left:43px;top:785px;width:28px;height:28px;background:#868666"></div><svg style="left:43px;top:785px" width="28" height="28" viewBox="0 0 28 28" ><g fill="none" stroke="#ececec" stroke-width="1.3"><rect x="5.5" y="4.5" width="6" height="15"/><rect x="16.5" y="4.5" width="6" height="15"/><path d="M4 23.5h20"/></g><rect x="7.5" y="6.5" width="1.8" height="1.8" fill="#ececec"/><rect x="18.5" y="6.5" width="1.8" height="1.8" fill="#ececec"/></svg><div class="t" style="left:77px;top:790px;color:#e8e8e8;">TelegramClient</div><svg style="left:44px;top:826px" width="10" height="6"><path d="M0 0h10L5 5.5z" fill="#a6a6a6"/></svg><div class="a" style="left:58px;top:815px;width:28px;height:28px;background:#d47d6b"></div><svg style="left:58px;top:815px" width="28" height="28" viewBox="0 0 28 28" ><g fill="none" stroke="#ececec" stroke-width="1.3"><path d="M8.5 20v3.5h15v-15H20"/><rect x="4.5" y="4.5" width="15" height="15"/><path d="M5 6.5h14" opacity=".6"/><rect x="5.5" y="8" width="3.5" height="3.5"/><rect x="14.5" y="8" width="3.5" height="3.5"/><rect x="10.5" y="14.5" width="3.5" height="3.5"/><path d="M9 9.7h5.5M7.2 11.5v5h3.3"/></g></svg><div class="t" style="left:92px;top:820px;color:#e8e8e8;">Объекты</div><svg style="left:61px;top:854px" width="6" height="10"><path d="M0 0v10L5.5 5z" fill="#a6a6a6"/></svg><div class="a" style="left:73px;top:845px;width:28px;height:28px;background:#d47d6b"></div><svg style="left:73px;top:845px" width="28" height="28" viewBox="0 0 28 28" ><g fill="none" stroke="#ececec" stroke-width="1.3"><rect x="4.5" y="4.5" width="19" height="19"/><path d="M5 6.5h18" opacity=".6"/><rect x="8.5" y="7" width="4.5" height="4.5"/><rect x="18.5" y="7" width="4.5" height="4.5"/><rect x="14.5" y="16.5" width="4.5" height="4.5"/><path d="M13 9.2h5.5M10.8 11.5v7h3.7"/></g></svg><div class="t" style="left:107px;top:850px;color:#e8e8e8;">Телеграм клиент</div><div class="a" style="left:237px;top:845px;width:28px;height:28px;background:#444444"></div><svg style="left:237px;top:845px" width="28" height="28" viewBox="0 0 28 28" ><path d="M5 21c0-6 4-8 10-8h4" fill="none" stroke="#e6e6e6" stroke-width="2.2"/><path d="M17 7.5L23.5 13 17 18.5z" fill="#e6e6e6"/></svg><div class="a" style="left:0px;top:971px;width:505px;height:30px;background:#2b2b2e"></div><div class="a" style="left:1px;top:970px;width:64px;height:29px;background:#262626;border:1px solid #3a3a42;border-top:none"></div><div class="t" style="left:7px;top:974px;color:#eeeeee;">Дерево</div><div class="t" style="left:71px;top:974px;color:#eeeeee;">Ветки</div>
<div class="a" style="left:505px;top:160px;width:1056px;height:630px;border:1px solid #3e3e46;border-top-width:2px;background:#262626"></div><div class="a" style="left:511px;top:167px;width:35px;height:34px;border:1px solid #606060;border-bottom:none;border-right-color:#151515;background:#222221"></div><svg style="left:511px;top:167px" width="34" height="34" viewBox="0 0 34 34" ><g fill="none" stroke="#e6e6e6" stroke-width="1.2"><path d="M11 9v14"/><path d="M7.5 20.5L11 24.5l3.5-4z"/><path d="M13.5 9.5h10"/><rect x="16.5" y="12.5" width="7" height="2.5"/><rect x="16.5" y="16.5" width="7" height="2.5"/><rect x="16.5" y="20.5" width="7" height="2.5"/></g></svg><div class="a" style="left:546px;top:167px;width:182px;height:34px;border:1px solid #7a7a7a;border-bottom:none;border-right-color:#111;border-left-color:#555;background:#222221"></div><div class="a" style="left:547px;top:169px;width:30px;height:30px;background:#bf8a55"></div><svg style="left:547px;top:169px" width="30" height="30" viewBox="0 0 30 30" ><g fill="none" stroke="#ececec" stroke-width="1.3"><rect x="5.5" y="6.5" width="19" height="17"/><path d="M15 6.5v17M5.5 15h19"/></g></svg><div class="t" style="left:583px;top:175px;color:#eeeeee;">Окно запуска</div><svg style="left:690px;top:177px" width="14" height="14" viewBox="0 0 14 14" ><path d="M0.5 0.5l13 13M13.5 0.5l-13 13" stroke="#e0e0e0" stroke-width="1.4"/></svg><div class="a" style="left:1530px;top:167px;width:24px;height:34px;background:#555554"></div><svg style="left:1530px;top:168px" width="24" height="34" viewBox="0 0 24 34" ><path d="M6 11.5h12M6 14h12" stroke="#e8e8e8" stroke-width="1.3"/><path d="M12 14v4" stroke="#e8e8e8" stroke-width="2"/><path d="M6.5 17h11L12 22.5z" fill="#e8e8e8"/></svg><div class="a" style="left:511px;top:201px;width:1043px;height:41px;background:#555554"></div><div class="a" style="left:511px;top:201px;width:1043px;height:1px;background:#666666"></div><div class="a" style="left:546px;top:200px;width:182px;height:1px;background:#1e1e1e"></div><div class="a" style="left:519px;top:216px;width:12px;height:12px;background:#d27a6a"></div><div class="t" style="left:537px;top:213px;color:#dedede;">Объекты</div><div class="a" style="left:606px;top:216px;width:12px;height:12px;background:#d27a6a"></div><div class="t" style="left:624px;top:213px;color:#dedede;">Стартовое окно</div><div class="a" style="left:742px;top:216px;width:12px;height:12px;background:#bf8a55"></div><div class="t" style="left:760px;top:213px;color:#dedede;">Окно запуска</div><div class="a" style="left:511px;top:242px;width:1044px;height:4px;background:#141414"></div><div class="a" style="left:511px;top:246px;width:21px;height:537px;background:#555554"></div><div class="a" style="left:511px;top:246px;width:1px;height:537px;background:#151515"></div><div class="a" style="left:531px;top:246px;width:1px;height:537px;background:#1e1e1e"></div><svg style="left:517px;top:507px" width="8" height="16"><path d="M0 0v15.5L7.5 7.75z" fill="#dedede"/></svg><div class="a" style="left:532px;top:246px;width:1023px;height:537px;background:#eeeeec"></div><div class="a" style="left:937px;top:420px;width:213px;height:189px;border:1px solid #8c8c8c;background:#f4f0f4"></div><div class="a" style="left:962px;top:421px;width:2px;height:2px;background:#777"></div><div class="a" style="left:962px;top:515px;width:2px;height:2px;background:#777"></div><div class="a" style="left:962px;top:585px;width:2px;height:2px;background:#777"></div><div class="a" style="left:985px;top:421px;width:2px;height:2px;background:#777"></div><div class="a" style="left:985px;top:515px;width:2px;height:2px;background:#777"></div><div class="a" style="left:985px;top:585px;width:2px;height:2px;background:#777"></div><div class="a" style="left:1009px;top:421px;width:2px;height:2px;background:#777"></div><div class="a" style="left:1009px;top:515px;width:2px;height:2px;background:#777"></div><div class="a" style="left:1009px;top:585px;width:2px;height:2px;background:#777"></div><div class="a" style="left:1032px;top:421px;width:2px;height:2px;background:#777"></div><div class="a" style="left:1032px;top:515px;width:2px;height:2px;background:#777"></div><div class="a" style="left:1032px;top:585px;width:2px;height:2px;background:#777"></div><div class="a" style="left:1056px;top:421px;width:2px;height:2px;background:#777"></div><div class="a" style="left:1056px;top:515px;width:2px;height:2px;background:#777"></div><div class="a" style="left:1056px;top:585px;width:2px;height:2px;background:#777"></div><div class="a" style="left:1079px;top:421px;width:2px;height:2px;background:#777"></div><div class="a" style="left:1079px;top:515px;width:2px;height:2px;background:#777"></div><div class="a" style="left:1079px;top:585px;width:2px;height:2px;background:#777"></div><div class="a" style="left:1103px;top:421px;width:2px;height:2px;background:#777"></div><div class="a" style="left:1103px;top:515px;width:2px;height:2px;background:#777"></div><div class="a" style="left:1103px;top:585px;width:2px;height:2px;background:#777"></div><div class="a" style="left:1126px;top:421px;width:2px;height:2px;background:#777"></div><div class="a" style="left:1126px;top:515px;width:2px;height:2px;background:#777"></div><div class="a" style="left:1126px;top:585px;width:2px;height:2px;background:#777"></div><div class="a" style="left:961px;top:444px;width:2px;height:2px;background:#666"></div><div class="a" style="left:1126px;top:444px;width:2px;height:2px;background:#666"></div><div class="a" style="left:961px;top:468px;width:2px;height:2px;background:#666"></div><div class="a" style="left:1126px;top:468px;width:2px;height:2px;background:#666"></div><div class="a" style="left:961px;top:492px;width:2px;height:2px;background:#666"></div><div class="a" style="left:1126px;top:492px;width:2px;height:2px;background:#666"></div><div class="a" style="left:961px;top:539px;width:2px;height:2px;background:#666"></div><div class="a" style="left:1126px;top:539px;width:2px;height:2px;background:#666"></div><div class="a" style="left:961px;top:562px;width:2px;height:2px;background:#666"></div><div class="a" style="left:1126px;top:562px;width:2px;height:2px;background:#666"></div><div class="a" style="left:985px;top:468px;width:2px;height:2px;background:#555"></div><div class="a" style="left:1103px;top:468px;width:2px;height:2px;background:#555"></div><div class="a" style="left:1009px;top:492px;width:2px;height:2px;background:#555"></div><div class="a" style="left:1032px;top:492px;width:2px;height:2px;background:#555"></div><div class="a" style="left:1056px;top:492px;width:2px;height:2px;background:#555"></div><div class="a" style="left:961px;top:444px;width:166px;height:59px;border:1px dotted #7070e8"></div><div class="a" style="left:961px;top:453px;width:166px;text-align:center;font-size:19px;line-height:22.5px;color:#111">Для запуска<br>нажмите кнопку</div><div class="a" style="left:961px;top:515px;width:166px;height:71px;border:1px solid #858585"></div><div class="a" style="left:961px;top:540px;width:166px;text-align:center;font-size:19px;line-height:22px;color:#111">Запуск</div><div class="a" style="left:505px;top:795px;width:1056px;height:177px;border:1px solid #3e3e46;background:#262626"></div><div class="a" style="left:506px;top:796px;width:1054px;height:28px;background:#242424"></div><div class="a" style="left:506px;top:824px;width:1054px;height:1px;background:#3e3e46"></div><div class="t" style="left:511px;top:798px;color:#f0f0f0;">Палитра</div><div class="a" style="left:583px;top:806px;width:895px;height:1px;background-image:linear-gradient(90deg,#525252 1px,transparent 1px);background-size:4px 1px"></div><div class="a" style="left:585px;top:810px;width:895px;height:1px;background-image:linear-gradient(90deg,#525252 1px,transparent 1px);background-size:4px 1px"></div><div class="a" style="left:583px;top:814px;width:895px;height:1px;background-image:linear-gradient(90deg,#525252 1px,transparent 1px);background-size:4px 1px"></div><svg style="left:1498px;top:807px" width="9" height="5"><path d="M0 0h9L4.5 5z" fill="#9a9a9a"/></svg><svg style="left:1520px;top:803px" width="10" height="13"><path d="M2.5 0h5v7h2v1.5h-9V7h2z" fill="#9a9a9a"/><path d="M5 8v5" stroke="#9a9a9a" stroke-width="1"/></svg><svg style="left:1542px;top:804px" width="11" height="11"><path d="M1 1l9 9M10 1l-9 9" stroke="#9a9a9a" stroke-width="1.8"/></svg><div class="a" style="left:511px;top:830px;width:1044px;height:136px;background:#555554"></div><div class="a" style="left:511px;top:830px;width:65px;height:36px;background:#212121;border-top:1px solid #6a6a6a;border-left:1px solid #6a6a6a"></div><div class="a" style="left:576px;top:830px;width:49px;height:36px;background:#555554;border:1px solid #2e2e2e;border-top:1px solid #6a6a6a"></div><div class="a" style="left:624px;top:830px;width:92px;height:36px;background:#555554;border:1px solid #2e2e2e;border-top:1px solid #6a6a6a"></div><div class="t" style="left:526px;top:839px;color:#f0f0f0;">Окна</div><div class="t" style="left:590px;top:839px;color:#e0e0e0;">ФБ</div><div class="t" style="left:640px;top:839px;color:#e0e0e0;">Объекты</div><div class="a" style="left:517px;top:879px;width:363px;height:28px;background:#444444;border:1px solid #5e5e5e"></div><div class="t" style="left:525px;top:884px;color:#777;font-style:italic">Поиск...</div><div class="a" style="left:511px;top:913px;width:374px;height:53px;background:#565656;border-top:1px solid #a8a8a8;border-left:1px solid #a8a8a8"></div><div class="a" style="left:864px;top:914px;width:21px;height:52px;background:#636363"></div><svg style="left:868px;top:921px" width="12" height="7"><path d="M0 6.5h12L6 0z" fill="#8e8e8e"/></svg><svg style="left:868px;top:951px" width="12" height="7"><path d="M0 0h12L6 6.5z" fill="#8e8e8e"/></svg><div class="a" style="left:885px;top:913px;width:1px;height:53px;background:#1c1c1c"></div><div class="a" style="left:531px;top:918px;width:328px;height:32px;background:#7c7c7c"></div><div class="a" style="left:531px;top:918px;width:31px;height:32px;background:#474747;border:1px solid #8a8a8a;border-right:none"></div><svg style="left:533px;top:920px" width="28" height="28" viewBox="0 0 28 28" ><g fill="none" stroke="#ececec" stroke-width="1.3" stroke-linejoin="round"><path d="M4.5 23.5V6.5h5.8l2.6-2h8.1v6"/><path d="M4.5 23.5H21L23.5 10.5h-7.9l-2.4 2.7H7z"/></g></svg><div class="t" style="left:574px;top:923px;color:#e8e8e8;">Диалог</div><div class="a" style="left:531px;top:951px;width:31px;height:11px;background:#474747;overflow:hidden"><svg style="left:1px;top:2px" width="28" height="28"><g fill="none" stroke="#d8d8d8" stroke-width="1.3"><path d="M4.5 23.5V6.5h5.8l2.6-2h8.1v6"/></g></svg></div><div class="a" style="left:574px;top:951px;width:20px;height:10px;overflow:hidden"><div class="t" style="left:0;top:4px;color:#d8d8d8">К</div></div><div class="a" style="left:888px;top:873px;width:4px;height:93px;background-image:repeating-linear-gradient(135deg,#4a4a4a 0 1.5px,#626262 1.5px 3px)"></div><div class="a" style="left:941px;top:892px;width:45px;height:29px;border:1px solid #dcdcdc"></div><svg style="left:941px;top:892px" width="45" height="29" viewBox="0 0 45 29" ><path d="M17.5 9.5h10v3h-3.5v8h-3v-8h-3.5z" fill="none" stroke="#dcdcdc" stroke-width="1.1"/></svg><div class="t" style="left:946px;top:938px;color:#dcdcdc;">Текст</div><div class="a" style="left:1079px;top:891px;width:45px;height:32px;border:1px solid #dcdcdc"></div><svg style="left:1079px;top:891px" width="45" height="32" viewBox="0 0 45 32" ><text x="3" y="23" font-family="Liberation Sans" font-size="17" fill="#d0d0d0" letter-spacing="-1">123</text><g fill="none" stroke="#dcdcdc" stroke-width="1"><rect x="32.5" y="3.5" width="8" height="25"/><path d="M32.5 11.5h8M32.5 20.5h8"/></g><path d="M34 10l2.5-3.5L39 10zM34 22l2.5 3.5L39 22z" fill="#dcdcdc"/></svg><div class="t" style="left:1049px;top:938px;color:#dcdcdc;">Числовой ввод</div><div class="a" style="left:1217px;top:892px;width:45px;height:29px;border:1px solid #dcdcdc"></div><svg style="left:1217px;top:892px" width="45" height="29" viewBox="0 0 45 29" ><path d="M19.5 7.5h6M19.5 21.5h6M22.5 7.5v14" fill="none" stroke="#dcdcdc" stroke-width="1.1"/></svg><div class="t" style="left:1185px;top:938px;color:#dcdcdc;">Текстовый ввод</div><div class="a" style="left:1355px;top:892px;width:45px;height:29px;border:1px solid #dcdcdc"></div><svg style="left:1355px;top:892px" width="45" height="29" viewBox="0 0 45 29" ><circle cx="10" cy="14.5" r="1.8" fill="#e4e4e4"/><circle cx="16" cy="14.5" r="1.8" fill="#e4e4e4"/><circle cx="22" cy="14.5" r="1.8" fill="#e4e4e4"/><circle cx="28" cy="14.5" r="1.8" fill="#e4e4e4"/><circle cx="34" cy="14.5" r="1.8" fill="#e4e4e4"/></svg><div class="t" style="left:1352px;top:938px;color:#dcdcdc;">Пароль</div><div class="a" style="left:1427px;top:830px;width:42px;height:42px;background:#1f1f1f"></div><div class="a" style="left:1469px;top:830px;width:42px;height:42px;background:#555554"></div><div class="a" style="left:1512px;top:830px;width:42px;height:42px;background:#555554"></div><div class="a" style="left:1511px;top:830px;width:1px;height:42px;background:#2e2e2e"></div><div class="a" style="left:1469px;top:872px;width:86px;height:1px;background:#2e2e2e"></div><svg style="left:1427px;top:830px" width="42" height="42" viewBox="0 0 42 42" ><g fill="none" stroke="#e8e8e8" stroke-width="1.3"><rect x="7.5" y="8.5" width="12" height="12"/><rect x="22.5" y="8.5" width="12" height="12"/><rect x="7.5" y="23.5" width="12" height="11"/><rect x="22.5" y="23.5" width="12" height="11"/></g></svg><svg style="left:1469px;top:830px" width="42" height="42" viewBox="0 0 42 42" ><g fill="none" stroke="#e8e8e8" stroke-width="1.3"><rect x="7.5" y="8.5" width="27" height="26"/><path d="M7.5 17.5h27M7.5 26.5h27M16.5 8.5v26"/></g></svg><svg style="left:1512px;top:830px" width="42" height="42" viewBox="0 0 42 42" ><g fill="none" stroke="#e8e8e8" stroke-width="1.3"><rect x="8.5" y="8.5" width="7" height="26"/><rect x="18.5" y="8.5" width="7" height="26"/><rect x="28.5" y="8.5" width="7" height="26"/></g></svg><div class="a" style="left:1524px;top:882px;width:20px;height:75px;background:#5f5f5f"></div><svg style="left:1528px;top:889px" width="12" height="7"><path d="M0 6.5h12L6 0z" fill="#8a8a8a"/></svg><div class="a" style="left:1526px;top:904px;width:16px;height:10px;background:#454545"></div><svg style="left:1528px;top:942px" width="12" height="7"><path d="M0 0h12L6 6.5z" fill="#8a8a8a"/></svg><div class="a" style="left:505px;top:972px;width:1061px;height:29px;background:#2b2b2e"></div><div class="a" style="left:574px;top:971px;width:69px;height:29px;background:#232323;border:1px solid #3a3a42;border-top:none"></div><div class="t" style="left:511px;top:975px;color:#eeeeee;">Легенда</div><div class="t" style="left:580px;top:975px;color:#eeeeee;">Палитра</div><div class="a" style="left:242px;top:736px;width:443px;height:58px;background:#ffffe5;border:1px solid #1a1a1a"></div><div class="t" style="left:256px;top:746px;color:#1a1a1a;font-style:italic;font-size:14px">Внешние ссылки</div><div class="t" style="left:256px;top:771px;color:#111;letter-spacing:-0.1px">Система <span style="color:#7a7a6a">|</span> АРМ 1 <span style="color:#7a7a6a">|</span> Графический интерфейс <span style="color:#7a7a6a">|</span> Шаблон экрана</div>
<div class="a" style="left:1566px;top:160px;width:353px;height:820px;border:1px solid #3e3e46;background:#262626"></div><div class="a" style="left:1567px;top:161px;width:351px;height:28px;background:#242424"></div><div class="a" style="left:1567px;top:189px;width:351px;height:1px;background:#3e3e46"></div><div class="t" style="left:1572px;top:163px;color:#f2f2f2;">Свойства</div><div class="a" style="left:1649px;top:171px;width:185px;height:1px;background-image:linear-gradient(90deg,#525252 1px,transparent 1px);background-size:4px 1px"></div><div class="a" style="left:1651px;top:175px;width:185px;height:1px;background-image:linear-gradient(90deg,#525252 1px,transparent 1px);background-size:4px 1px"></div><div class="a" style="left:1649px;top:179px;width:185px;height:1px;background-image:linear-gradient(90deg,#525252 1px,transparent 1px);background-size:4px 1px"></div><svg style="left:1857px;top:172px" width="9" height="5"><path d="M0 0h9L4.5 5z" fill="#9a9a9a"/></svg><svg style="left:1878px;top:168px" width="10" height="13"><path d="M2.5 0h5v7h2v1.5h-9V7h2z" fill="#9a9a9a"/><path d="M5 8v5" stroke="#9a9a9a" stroke-width="1"/></svg><svg style="left:1900px;top:169px" width="11" height="11"><path d="M1 1l9 9M10 1l-9 9" stroke="#9a9a9a" stroke-width="1.8"/></svg><div class="a" style="left:1572px;top:195px;width:341px;height:779px;background:#555554"></div><div class="t" style="left:1680px;top:199px;color:#e8e8e8;">Телеграм клиент 1</div><div class="a" style="left:1572px;top:226px;width:341px;height:1px;background:#3a3a3a"></div><div class="a" style="left:1605px;top:227px;width:1px;height:33px;background:#2a2a2a"></div><div class="a" style="left:1639px;top:227px;width:2px;height:33px;background:#2a2a2a"></div><div class="a" style="left:1641px;top:227px;width:170px;height:33px;background:#444444;border-top:1px solid #5a5a5a"></div><div class="t" style="left:1648px;top:235px;color:#777;font-style:italic">Поиск...</div><div class="a" style="left:1811px;top:227px;width:33px;height:33px;background:#1f1f1f"></div><div class="a" style="left:1844px;top:227px;width:1px;height:33px;background:#2a2a2a"></div><div class="a" style="left:1878px;top:227px;width:1px;height:33px;background:#2a2a2a"></div><div class="a" style="left:1572px;top:260px;width:341px;height:1px;background:#2a2a2a"></div><div class="a" style="left:1572px;top:261px;width:341px;height:4px;background:#4e4e4e"></div><svg style="left:1572px;top:227px" width="33" height="33" viewBox="0 0 33 33" ><text x="7" y="15" font-family="Liberation Sans" font-weight="bold" font-size="8" fill="#cfcfcf">A</text><text x="7" y="24" font-family="Liberation Sans" font-weight="bold" font-size="8" fill="#cfcfcf">Z</text><path d="M13.5 8.5h12l-4.5 7v9h-3v-9z" fill="none" stroke="#dcdcdc" stroke-width="1.1"/></svg><svg style="left:1606px;top:227px" width="33" height="33" viewBox="0 0 33 33" ><g fill="none" stroke="#dcdcdc" stroke-width="1.1"><path d="M8.5 8v18"/><path d="M8.5 11.5h3M12.5 9v6l4-3z"/><path d="M16.5 22.5h-5M12.5 20v6l-4-3z" transform="translate(0 0)"/><rect x="19.5" y="8.5" width="6" height="12"/><path d="M19.5 12.5h6M19.5 16.5h6"/></g></svg><svg style="left:1811px;top:227px" width="33" height="33" viewBox="0 0 33 33" ><g fill="none" stroke="#e8e8e8" stroke-width="1.2"><rect x="9.5" y="7.5" width="15" height="8"/><path d="M9.5 10.5h15M9.5 13h15"/><rect x="9.5" y="17.5" width="15" height="8"/><path d="M9.5 20.5h15M9.5 23h15"/></g></svg><svg style="left:1845px;top:227px" width="33" height="33" viewBox="0 0 33 33" ><path d="M10.5 26V8.5h15l-4 5 4 5h-15" fill="none" stroke="#dcdcdc" stroke-width="1.2"/></svg><svg style="left:1879px;top:227px" width="33" height="33" viewBox="0 0 33 33" ><path d="M11.5 7.5h10v8h-3v10l-2-1.5 1.5-1.5-1.5-1.5 1.5-1.5-1.5-1.5v-2h-5z" fill="none" stroke="#dcdcdc" stroke-width="1.2"/><rect x="15.5" y="10" width="2" height="2" fill="#dcdcdc"/></svg><div class="a" style="left:1572px;top:265px;width:341px;height:1px;background:#6e6e6e"></div><div class="a" style="left:1572px;top:266px;width:341px;height:33px;background:#555554"></div><div class="a" style="left:1572px;top:299px;width:341px;height:1px;background:#141414"></div><div class="t" style="left:1588px;top:275px;color:#eaeaea;">Общие</div><svg style="left:1885px;top:278px" width="15" height="8"><path d="M0 7.5h15L7.5 0z" fill="#e4e4e4"/></svg><div class="a" style="left:1572px;top:300px;width:1px;height:250px;background:#7a7a7a"></div><svg style="left:1751px;top:300px" width="6" height="250"><defs><pattern id="sp1" width="6" height="9" patternUnits="userSpaceOnUse"><path d="M0.5 7.5L4.5 0.5" stroke="#6a6a6a" stroke-width="1"/></pattern></defs><rect x="0" y="0" width="5" height="250" fill="url(#sp1)"/><rect x="4" y="0" width="2" height="250" fill="#404040"/></svg><div class="t" style="left:1615px;top:311px;color:#e2e2e2;">Отключить испо...</div><div class="a" style="left:1760px;top:309px;width:20px;height:20px;border:1.5px solid #e4e4e4"></div><div class="t" style="left:1615px;top:346px;color:#e2e2e2;">Сохранять</div><div class="t" style="left:1763px;top:346px;color:#e6e6e6;">Наследуется</div><div class="t" style="left:1615px;top:381px;color:#e2e2e2;">Имя</div><div class="a" style="left:1759px;top:372px;width:150px;height:33px;background:#444444;border:1px solid #5f5f5f;overflow:hidden"><div class="t" style="left:7px;top:7px;color:#f0f0f0;font-weight:bold;letter-spacing:-0.2px">Телеграм клиент 1</div></div><div class="t" style="left:1615px;top:416px;color:#e2e2e2;">Полное имя</div><div class="a" style="left:1759px;top:407px;width:150px;height:33px;background:#444444;border:1px solid #5f5f5f;overflow:hidden"><div class="t" style="left:7px;top:7px;color:#999999">Объекты.Телеграм клиент 1</div></div><div class="t" style="left:1615px;top:451px;color:#e2e2e2;">Метки</div><div class="a" style="left:1759px;top:442px;width:150px;height:33px;background:#444444;border:1px solid #5f5f5f;overflow:hidden"></div><div class="t" style="left:1615px;top:486px;color:#e2e2e2;">Комментарий</div><div class="a" style="left:1759px;top:477px;width:150px;height:33px;background:#444444;border:1px solid #5f5f5f;overflow:hidden"></div><div class="t" style="left:1615px;top:521px;color:#e2e2e2;">Описание</div><div class="a" style="left:1759px;top:512px;width:150px;height:33px;background:#444444;border:1px solid #5f5f5f;overflow:hidden"></div><div class="a" style="left:1572px;top:550px;width:341px;height:1px;background:#6e6e6e"></div><div class="a" style="left:1572px;top:551px;width:341px;height:33px;background:#555554"></div><div class="a" style="left:1572px;top:584px;width:341px;height:1px;background:#141414"></div><div class="t" style="left:1588px;top:560px;color:#eaeaea;">Задача</div><svg style="left:1885px;top:563px" width="15" height="8"><path d="M0 7.5h15L7.5 0z" fill="#e4e4e4"/></svg><div class="a" style="left:1572px;top:585px;width:1px;height:39px;background:#7a7a7a"></div><svg style="left:1751px;top:585px" width="6" height="35"><defs><pattern id="sp2" width="6" height="9" patternUnits="userSpaceOnUse"><path d="M0.5 7.5L4.5 0.5" stroke="#6a6a6a" stroke-width="1"/></pattern></defs><rect x="0" y="0" width="5" height="35" fill="url(#sp2)"/><rect x="4" y="0" width="2" height="35" fill="#404040"/></svg><div class="t" style="left:1615px;top:594px;color:#e2e2e2;">Место исполнен...</div><div class="a" style="left:1759px;top:585px;width:150px;height:34px;overflow:hidden"><div class="t" style="left:4px;top:9px;color:#e6e6e6">В задаче родительского объекта</div></div><div class="a" style="left:1572px;top:624px;width:341px;height:1px;background:#6e6e6e"></div><div class="a" style="left:1572px;top:625px;width:341px;height:33px;background:#555554"></div><div class="a" style="left:1572px;top:658px;width:341px;height:1px;background:#141414"></div><div class="t" style="left:1588px;top:634px;color:#eaeaea;">Отношения</div><svg style="left:1885px;top:637px" width="15" height="8"><path d="M0 7.5h15L7.5 0z" fill="#e4e4e4"/></svg><div class="a" style="left:1572px;top:659px;width:1px;height:39px;background:#7a7a7a"></div><svg style="left:1751px;top:659px" width="6" height="36"><defs><pattern id="sp3" width="6" height="9" patternUnits="userSpaceOnUse"><path d="M0.5 7.5L4.5 0.5" stroke="#6a6a6a" stroke-width="1"/></pattern></defs><rect x="0" y="0" width="5" height="36" fill="url(#sp3)"/><rect x="4" y="0" width="2" height="36" fill="#404040"/></svg><div class="t" style="left:1615px;top:669px;color:#e2e2e2;">Ссылается</div><div class="a" style="left:1759px;top:660px;width:150px;height:33px;background:#444444;border:1px solid #5f5f5f;overflow:hidden"><div class="t" style="left:7px;top:7px;color:#9a9a9a">Библиотеки.TelegramClient</div></div><div class="a" style="left:1572px;top:698px;width:341px;height:1px;background:#6e6e6e"></div><div class="a" style="left:1572px;top:699px;width:341px;height:33px;background:#555554"></div><div class="a" style="left:1572px;top:732px;width:341px;height:1px;background:#141414"></div><div class="t" style="left:1588px;top:708px;color:#eaeaea;">Разрешения</div><svg style="left:1885px;top:711px" width="15" height="8"><path d="M0 7.5h15L7.5 0z" fill="#e4e4e4"/></svg><div class="a" style="left:1572px;top:733px;width:1px;height:140px;background:#7a7a7a"></div><svg style="left:1751px;top:733px" width="6" height="140"><defs><pattern id="sp4" width="6" height="9" patternUnits="userSpaceOnUse"><path d="M0.5 7.5L4.5 0.5" stroke="#6a6a6a" stroke-width="1"/></pattern></defs><rect x="0" y="0" width="5" height="140" fill="url(#sp4)"/><rect x="4" y="0" width="2" height="140" fill="#404040"/></svg><div class="t" style="left:1615px;top:743px;color:#e2e2e2;">Всегда отображ...</div><div class="a" style="left:1760px;top:741px;width:20px;height:20px;border:1.5px solid #e4e4e4"></div><div class="t" style="left:1615px;top:778px;color:#e2e2e2;">Доступ через OP...</div><div class="t" style="left:1763px;top:778px;color:#e6e6e6;">По умолчанию</div><div class="t" style="left:1615px;top:813px;color:#e2e2e2;">Отображать при...</div><div class="t" style="left:1763px;top:813px;color:#e6e6e6;">По умолчанию</div><div class="t" style="left:1615px;top:848px;color:#e2e2e2;">Отображать в де...</div><div class="t" style="left:1763px;top:848px;color:#e6e6e6;">По умолчанию</div><div class="a" style="left:1566px;top:985px;width:353px;height:40px;border:1px solid #3e3e46;background:#242424"></div><div class="t" style="left:1572px;top:988px;color:#f0f0f0;">Мини-карта</div><div class="a" style="left:1669px;top:996px;width:167px;height:1px;background-image:linear-gradient(90deg,#525252 1px,transparent 1px);background-size:4px 1px"></div><div class="a" style="left:1671px;top:1000px;width:167px;height:1px;background-image:linear-gradient(90deg,#525252 1px,transparent 1px);background-size:4px 1px"></div><div class="a" style="left:1669px;top:1004px;width:167px;height:1px;background-image:linear-gradient(90deg,#525252 1px,transparent 1px);background-size:4px 1px"></div><svg style="left:1857px;top:997px" width="9" height="5"><path d="M0 0h9L4.5 5z" fill="#9a9a9a"/></svg><svg style="left:1878px;top:993px" width="10" height="13"><path d="M2.5 0h5v7h2v1.5h-9V7h2z" fill="#9a9a9a"/><path d="M5 8v5" stroke="#9a9a9a" stroke-width="1"/></svg><svg style="left:1900px;top:994px" width="11" height="11"><path d="M1 1l9 9M10 1l-9 9" stroke="#9a9a9a" stroke-width="1.8"/></svg>
<div class="a" style="left:0px;top:1001px;width:1920px;height:1px;background:#3a3a42"></div><div class="a" style="left:0px;top:1002px;width:1920px;height:28px;background:#2e2e2e"></div><div class="t" style="left:4px;top:1007px;color:#eeeeee;letter-spacing:-0.14px">Объекты.Стартовое окно.Ресурсы.Окна.Окно запуска</div><div class="t" style="left:1579px;top:1007px;color:#e8e8e8;">-139,-52</div><svg style="left:1665px;top:1004px" width="24" height="24" viewBox="0 0 24 24" ><circle cx="11.5" cy="11.5" r="10.3" fill="none" stroke="#e6e6e6" stroke-width="1.4"/><path d="M5.5 11.5h12" stroke="#e6e6e6" stroke-width="2.6"/></svg><div class="a" style="left:1692px;top:1014px;width:110px;height:4px;background:#4a4a4a"></div><div class="a" style="left:1709px;top:1003px;width:7px;height:27px;border:1px solid #e0e0e0;border-radius:3px;background:#2e2e2e"></div><svg style="left:1805px;top:1004px" width="24" height="24" viewBox="0 0 24 24" ><circle cx="11.5" cy="11.5" r="10.3" fill="none" stroke="#e6e6e6" stroke-width="1.4"/><path d="M5.5 11.5h12M11.5 5.5v12" stroke="#e6e6e6" stroke-width="2.6"/></svg><div class="t" style="left:1834px;top:1007px;color:#e8e8e8;">0.95</div><div class="a" style="left:1885px;top:1003px;width:24px;height:27px;background:#555554"></div><svg style="left:1885px;top:1003px" width="24" height="27" viewBox="0 0 24 27" ><path d="M6 8.5h12M6 11h12" stroke="#e8e8e8" stroke-width="1.3"/><path d="M12 11v4" stroke="#e8e8e8" stroke-width="2"/><path d="M6.5 14h11L12 19.5z" fill="#e8e8e8"/></svg>
</body></html>
